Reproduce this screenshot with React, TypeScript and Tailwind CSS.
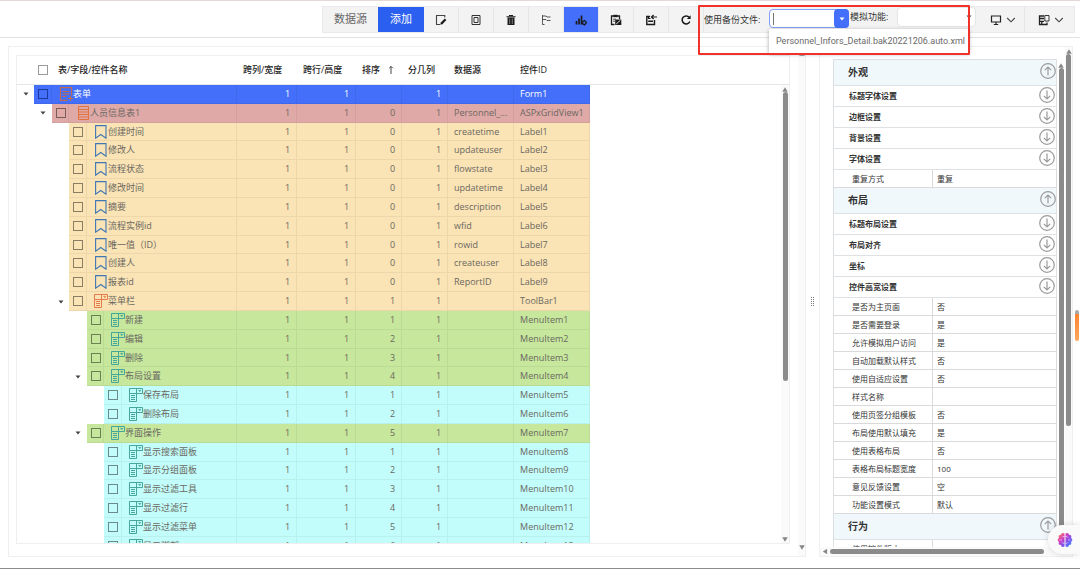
import type { ReactNode } from "react";
import clsx from "clsx";

type Kind = "form" | "grid" | "label" | "toolbar" | "menu";
type Row = {
  level: number;
  kind: Kind;
  name: string;
  order: string;
  source?: string;
  id: string;
  open?: boolean;
};

const label = (name: string, source: string, n: number): Row => ({
  level: 2,
  kind: "label",
  name,
  order: "0",
  source,
  id: `Label${n}`,
});
const menu = (level: number, name: string, order: number, n: number, open = false): Row => ({
  level,
  kind: "menu",
  name,
  order: String(order),
  id: `MenuItem${n}`,
  open,
});

const rows: Row[] = [
  { level: 0, kind: "form", name: "表单", order: "", id: "Form1", open: true },
  { level: 1, kind: "grid", name: "人员信息表1", order: "0", source: "Personnel_...", id: "ASPxGridView1", open: true },
  label("创建时间", "createtime", 1),
  label("修改人", "updateuser", 2),
  label("流程状态", "flowstate", 3),
  label("修改时间", "updatetime", 4),
  label("摘要", "description", 5),
  label("流程实例id", "wfid", 6),
  label("唯一值（ID）", "rowid", 7),
  label("创建人", "createuser", 8),
  label("报表id", "ReportID", 9),
  { level: 2, kind: "toolbar", name: "菜单栏", order: "1", id: "ToolBar1", open: true },
  menu(3, "新建", 1, 1),
  menu(3, "编辑", 2, 2),
  menu(3, "删除", 3, 3),
  menu(3, "布局设置", 4, 4, true),
  menu(4, "保存布局", 1, 5),
  menu(4, "删除布局", 2, 6),
  menu(3, "界面操作", 5, 7, true),
  menu(4, "显示搜索面板", 1, 8),
  menu(4, "显示分组面板", 2, 9),
  menu(4, "显示过滤工具", 3, 10),
  menu(4, "显示过滤行", 4, 11),
  menu(4, "显示过滤菜单", 5, 12),
  menu(4, "显示脚部", 6, 13),
];

const levelBg = ["bg-[#436ffa]", "bg-[#dfa9a7]", "bg-[#fae3b4]", "bg-[#c6e79c]", "bg-[#c2fdfb]"];

function BarMenuIcon({ className }: { className: string }) {
  return (
    <svg viewBox="0 0 14 14" className={clsx("h-3.5 w-3.5 shrink-0", className)} fill="none" stroke="currentColor" strokeWidth="1">
      <path d="M.5 .5H13.5V5.5H.5ZM7.5 .5V5.5M.5 5.5V13.5H7.5V5.5M2 7.5H6M2 9.5H6M2 11.5H6" />
      <path d="M9.5 2.3H12L10.8 3.8Z" fill="currentColor" strokeWidth=".5" />
    </svg>
  );
}

function RowIcon({ kind }: { kind: Kind }) {
  if (kind === "form")
    return (
      <svg viewBox="0 0 14 14" className="h-3.5 w-3.5 shrink-0" fill="none" stroke="#c4694f" strokeWidth="1.1">
        <path d="M8.5 13.4H1.5V.6H12.5V8.5M3.5 4.5H10.5M3.5 7H10.500M3.5 9.5H7.500M11.5 9V14M9 11.5H14" />
      </svg>
    );
  if (kind === "grid")
    return (
      <svg viewBox="0 0 14 14" className="h-3.5 w-3.5 shrink-0 text-[#e2733f]" fill="none" stroke="currentColor" strokeWidth="1">
        <path d="M2.500 .5H12.500V13.500H2.500ZM2.500 3.500H12.500M2.500 6H12.500M2.500 8.500H12.500M2.500 11H12.500" />
      </svg>
    );
  if (kind === "label")
    return (
      <svg viewBox="0 0 14 14" className="h-3.5 w-3.5 shrink-0 text-[#3f77b5]" fill="none" stroke="currentColor" strokeWidth="1.1">
        <path d="M1.600 .6H12V13.200L6.800 9.500L1.600 13.200Z" />
      </svg>
    );
  return <BarMenuIcon className={kind === "toolbar" ? "text-[#e57b4a]" : "text-[#45a79a]"} />;
}

function Caret({ className }: { className?: string }) {
  return (
    <svg viewBox="0 0 6 4" className={clsx("h-1 w-1.5", className)} fill="currentColor">
      <path d="M.5 .5H5.500L3 3.500Z" />
    </svg>
  );
}

function Tick({ name, className }: { name: string; className: string }) {
  return (
    <input
      type="checkbox"
      aria-label={name}
      className={clsx("block h-2.5 w-2.5 appearance-none border checked:bg-blue-600", className)}
    />
  );
}

function TreeRow({ row }: { row: Row }) {
  const bg = levelBg[row.level];
  const line = "border-b border-r border-black/5";
  const cell = clsx(bg, line, "overflow-hidden p-0 leading-4");
  const num = clsx(cell, "pr-1.5 text-right");
  return (
    <tr className={row.level === 0 ? "text-white" : "text-[#6b6862]"}>
      {row.level > 0 && <td colSpan={row.level} className="p-0" />}
      <td className="p-0">
        {row.open && (
          <button type="button" aria-label={`折叠 ${row.name}`} className="flex h-4 w-full items-center justify-center text-[#444]">
            <Caret />
          </button>
        )}
      </td>
      <td className={cell}>
        <div className="flex h-4 items-center justify-center pl-px">
          <Tick name={row.name} className={row.level === 0 ? "border-[#1c3a9c]" : "border-black/45"} />
        </div>
      </td>
      <td colSpan={5 - row.level} className={cell}>
        <div className="flex h-4 items-center pl-[7px] whitespace-nowrap">
          <RowIcon kind={row.kind} />
          <span>{row.name}</span>
        </div>
      </td>
      <td className={num}>1</td>
      <td className={num}>1</td>
      <td className={num}>{row.order}</td>
      <td className={num}>1</td>
      <td className={clsx(cell, "pl-1.5 whitespace-nowrap")}>{row.source}</td>
      <td className={clsx(cell, "pl-1.5 whitespace-nowrap")}>{row.id}</td>
      <td className="p-0" />
    </tr>
  );
}

function TreeTable() {
  return (
    <table className="h-[500px] w-full table-fixed border-separate border-spacing-0 text-[9px]">
      <colgroup>
        <col className="w-[17px]" />
        <col className="w-[18px]" />
        <col className="w-[17px]" />
        <col className="w-[18px]" />
        <col className="w-[17px]" />
        <col className="w-[18px]" />
        <col className="w-[115px]" />
        <col className="w-[60px]" />
        <col className="w-[59px]" />
        <col className="w-[46px]" />
        <col className="w-[46px]" />
        <col className="w-[66px]" />
        <col className="w-[76px]" />
        <col />
      </colgroup>
      <thead>
        <tr className="h-[29px] text-left text-[#1d1d1d] [&>th]:border-b [&>th]:border-[#e6e6e6] [&>th]:p-0 [&>th]:font-medium [&>th]:whitespace-nowrap">
          <th />
          <th>
            <Tick name="全选" className="mx-auto border-[#9a9a9a]" />
          </th>
          <th colSpan={5}>
            <span className="pl-1.5">表/字段/控件名称</span>
          </th>
          <th>
            <span className="pl-1.5">跨列/宽度</span>
          </th>
          <th>
            <span className="pl-1.5">跨行/高度</span>
          </th>
          <th>
            <span className="flex items-center gap-2 pl-1.5">
              排序
              <svg viewBox="0 0 6 10" className="h-2.5 w-1.5" fill="none" stroke="#333" strokeWidth=".9">
                <path d="M3 9V1.500M1.200 3.200L3 1.400L4.800 3.200" />
              </svg>
            </span>
          </th>
          <th>
            <span className="pl-1.5">分几列</span>
          </th>
          <th>
            <span className="pl-1.5">数据源</span>
          </th>
          <th>
            <span className="pl-1.5">控件ID</span>
          </th>
          <th />
        </tr>
      </thead>
      <tbody>
        {rows.map((r) => (
          <TreeRow key={r.id} row={r} />
        ))}
      </tbody>
    </table>
  );
}

function ScrollArrow({ down = false }: { down?: boolean }) {
  return (
    <svg viewBox="0 0 6 5" className={clsx("h-[5px] w-1.5 shrink-0 text-[#868686]", down && "rotate-180")} fill="currentColor">
      <path d="M3 .3L5.800 4.700H.2Z" />
    </svg>
  );
}

function VScroll({ thumb, down = true, className }: { thumb: string; down?: boolean; className?: string }) {
  return (
    <div className={clsx("flex shrink-0 flex-col items-center", className)}>
      <ScrollArrow />
      <div className={clsx("w-[5px] rounded-full bg-[#8b8b8b]", thumb)} />
      <div className="flex-1" />
      {down && <ScrollArrow down />}
    </div>
  );
}

type PropLine = { t: "head" | "sub"; text: string } | { t: "prop"; text: string; value: string };
const prop = (text: string, value: string): PropLine => ({ t: "prop", text, value });
const sub = (text: string): PropLine => ({ t: "sub", text });

const props: PropLine[] = [
  { t: "head", text: "外观" },
  sub("标题字体设置"),
  sub("边框设置"),
  sub("背景设置"),
  sub("字体设置"),
  prop("重复方式", "重复"),
  { t: "head", text: "布局" },
  sub("标题布局设置"),
  sub("布局对齐"),
  sub("坐标"),
  sub("控件高宽设置"),
  prop("是否为主页面", "否"),
  prop("是否需要登录", "是"),
  prop("允许模拟用户访问", "是"),
  prop("自动加载默认样式", "否"),
  prop("使用自适应设置", "否"),
  prop("样式名称", ""),
  prop("使用页签分组模板", "否"),
  prop("布局使用默认填充", "是"),
  prop("使用表格布局", "否"),
  prop("表格布局标题宽度", "100"),
  prop("意见反馈设置", "空"),
  prop("功能设置模式", "默认"),
  { t: "head", text: "行为" },
  prop("使用控件版本", ""),
];

function CircleArrow({ up = false }: { up?: boolean }) {
  return (
    <svg viewBox="0 0 16 16" className={clsx("mb-[3px] h-4 w-4", up && "rotate-180")} fill="none" stroke="#9b9b9b" strokeWidth="1.200">
      <circle cx="8" cy="8" r="7.300" />
      <path d="M8 3.500V12M4.800 8.800L8 12L11.200 8.800" />
    </svg>
  );
}

function PropertyTable() {
  return (
    <table className="w-full table-fixed border-separate border-spacing-0 border-t border-l border-[#dcdfe2] text-[8px] text-[#333]">
      <colgroup>
        <col className="w-[99px]" />
        <col />
      </colgroup>
      <tbody>
        {props.map((p) =>
          p.t === "prop" ? (
            <tr key={p.text} className="h-[18px]">
              <td className="border-r border-b border-[#dadada] py-0 pr-0 pl-[18px] leading-4 whitespace-nowrap">{p.text}</td>
              <td className="border-r border-b border-[#dadada] py-0 pr-0 pl-1 leading-4">{p.value}</td>
            </tr>
          ) : (
            <tr key={p.text} className={p.t === "head" ? "h-[26px] bg-[#f1f8fc]" : "h-[21px]"}>
              <td colSpan={2} className="border-r border-b border-[#dfe2e4] p-0">
                <button
                  type="button"
                  className={clsx(
                    "flex w-full items-center justify-between font-bold",
                    p.t === "head" ? "h-[25px] pl-3.5 text-[10px]" : "h-5 pr-px pl-[15px]",
                  )}
                >
                  {p.text}
                  <CircleArrow up={p.t === "head"} />
                </button>
              </td>
            </tr>
          ),
        )}
      </tbody>
    </table>
  );
}

function ToolButton({ name, active = false, children }: { name: string; active?: boolean; children: ReactNode }) {
  return (
    <button
      type="button"
      aria-label={name}
      className={clsx("flex w-[35px] items-center justify-center border-r border-[#e6e6e6]", active && "bg-[#436ffa]")}
    >
      <svg viewBox="0 0 12 12" className="h-3 w-3" fill="none" stroke="#1a1a1a" strokeWidth="1.100">
        {children}
      </svg>
    </button>
  );
}

function Chevron() {
  return (
    <svg viewBox="0 0 10 6" className="h-1.5 w-2.5" fill="none" stroke="#444" strokeWidth="1.100">
      <path d="M1.200 1L5 4.800L8.800 1" />
    </svg>
  );
}

function Toolbar() {
  return (
    <div className="flex h-[37px] shrink-0 justify-end border-b border-[#e2e2e2] pt-[5px] pr-[5px] pb-1">
      <div className="flex border border-[#ebebeb] bg-[#f3f3f3]">
        <button type="button" className="w-[55px] text-[11px] text-[#666]">
          数据源
        </button>
        <button type="button" className="w-[46px] bg-[#2b5ff0] text-[11px] text-white">
          添加
        </button>
        <ToolButton name="编辑">
          <path d="M9.800 3.500V1.500H1.500V10.500H5" stroke="#444" />
          <path d="M5.300 10.700L5.800 8.500L9.800 4.500L11.400 6L7.400 10.200Z" fill="#1a1a1a" stroke="none" />
        </ToolButton>
        <ToolButton name="布局">
          <path d="M2 1.500H10V10.500H2Z" stroke="#333" strokeWidth="1" />
          <path d="M4 3.500H8V8.500H4Z" stroke="#333" strokeWidth="1" />
        </ToolButton>
        <ToolButton name="删除">
          <path d="M2.500 3.500H9.500V11H2.500Z" fill="#1a1a1a" stroke="none" />
          <path d="M1.500 2.700H10.500M4.500 2V1.500H7.500V2" />
          <path d="M4.700 4.500V10M7.300 4.500V10" stroke="#a8a8a8" strokeWidth=".7" />
        </ToolButton>
        <ToolButton name="标记">
          <path d="M2.500 1V8.500M2.500 2H6L7 3H10.500M2.500 5.500H6L7 6.500H10.500M2.500 8.500V10.500H4.500" strokeWidth=".9" stroke="#444" />
        </ToolButton>
        <ToolButton name="图表" active>
          <path d="M1.500 10.500V7M4 10.500V4.500M6.500 10.500V1.500" strokeWidth="1.700" />
          <circle cx="9.300" cy="8.700" r="1.800" strokeWidth="1.300" />
          <path d="M9.300 5.800V7M9.300 10.400V11.600M6.500 8.700H7.600M11 8.700H12" strokeWidth=".9" />
        </ToolButton>
        <ToolButton name="校验">
          <path d="M9.500 5V2H1.500V10.500H4.500" strokeWidth="1.300" />
          <path d="M3.500 .8H7.500V3.200H3.500Z" fill="#1a1a1a" stroke="none" />
          <path d="M3 5.200H6M3 7.200H5" strokeWidth=".8" />
          <path d="M5.200 5.500H11.300V11H5.200Z" fill="#1a1a1a" stroke="none" />
          <path d="M6.200 10L10.400 6.300" stroke="#f3f3f3" strokeWidth=".9" />
        </ToolButton>
        <ToolButton name="备份">
          <path d="M5 2.500H1.800V10.500H9.500V6" strokeWidth="1.400" />
          <path d="M3.200 6.500H8V8H3.200Z" fill="#1a1a1a" stroke="none" />
          <path d="M6.500 3H12M8.600 1L6.500 3L8.600 5M3.500 2V4.500H5.500" strokeWidth="1.200" />
        </ToolButton>
        <ToolButton name="刷新">
          <path d="M9.800 7.500A4 4 0 1 1 9.200 3.300" strokeWidth="1.500" />
          <path d="M10.600 1.300V5H6.900Z" fill="#1a1a1a" stroke="none" />
        </ToolButton>

        <div className="relative flex w-[273px] text-[9px] text-[#333]">
          <label htmlFor="backup" className="flex w-[65px] items-center whitespace-nowrap">
            使用备份文件:
          </label>
          <div className="mt-0.5 flex h-[19px] w-20 rounded-sm border border-[#86a2f8] bg-white">
            <input id="backup" type="text" defaultValue="" className="min-w-0 flex-1 bg-transparent px-1 outline-none" />
            <button type="button" aria-label="打开备份文件列表" className="-my-px -mr-px flex w-[15px] items-center justify-center rounded-sm bg-[#436ffa] text-white">
              <Caret />
            </button>
          </div>
          <label htmlFor="feature" className="mt-0.5 flex h-[15px] w-12 items-center pl-px whitespace-nowrap">
            模拟功能:
          </label>
          <div className="relative h-5 w-[79px]">
            <select id="feature" className="h-full w-full appearance-none rounded-sm border border-[#e6e6e6] bg-white">
              <option value="" />
            </select>
            <Caret className="pointer-events-none absolute top-2 right-1 text-[#444]" />
          </div>

          <div className="absolute top-[6px] left-[69px] h-3 w-px bg-[#777]" />
          <ul role="listbox" aria-label="备份文件" className="absolute top-[22px] left-[65px] z-10 w-[200px] bg-white font-['Roboto',sans-serif] shadow-[0_1px_4px_rgba(0,0,0,0.35)]">
            <li role="option" aria-selected="false" className="pl-[7px] leading-6 whitespace-nowrap text-[#6a6a6a]">
              Personnel_Infors_Detail.bak20221206.auto.xml
            </li>
          </ul>
          <div className="pointer-events-none absolute -top-0.5 -left-1.5 z-20 h-[50px] w-[272px] rounded-[1px] border-2 border-[#f0322a]" />
        </div>

        <button type="button" aria-label="设备预览" className="flex w-12 items-center justify-end gap-1 border-r border-[#e6e6e6] pr-2">
          <svg viewBox="0 0 12 12" className="h-3 w-3" fill="none" stroke="#222" strokeWidth="1.200">
            <path d="M1.500 2H10.500V8H1.500ZM6 8V10.500M3.800 10.500H8.200" />
          </svg>
          <Chevron />
        </button>
        <button type="button" aria-label="窗口布局" className="flex w-[49px] items-center justify-center gap-1 pl-0.5">
          <svg viewBox="0 0 12 12" className="h-3 w-3" fill="none" stroke="#222" strokeWidth="1.300">
            <path d="M6 2H1.500V10.500H9V8.500M2 4.500H6M2 7.300H6M3.800 7V10" />
            <path d="M6.800 1.500H11V7H6.800Z" strokeWidth=".9" />
          </svg>
          <Chevron />
        </button>
      </div>
    </div>
  );
}

function Brain() {
  return (
    <svg viewBox="0 0 16 16" className="h-4 w-4">
      <defs>
        <linearGradient id="brain" x1="0" y1="0" x2="1" y2="1">
          <stop offset="0" stopColor="#ff8a3c" />
          <stop offset=".35" stopColor="#d63fc0" />
          <stop offset=".65" stopColor="#7a55f0" />
          <stop offset="1" stopColor="#2f9bff" />
        </linearGradient>
      </defs>
      <path
        fill="url(#brain)"
        d="M7.500 1.600C6.500 .4 4.200 .8 4 2.800C2 2.600 1 4.500 2 6C.2 6.600 .2 9.200 2 9.900C1 11.600 2.200 13.300 4 13C4.200 15.200 6.500 15.600 7.500 14.300ZM8.500 1.600C9.500 .4 11.800 .8 12 2.800C14 2.600 15 4.500 14 6C15.800 6.600 15.800 9.200 14 9.900C15 11.600 13.800 13.300 12 13C11.800 15.200 9.500 15.600 8.500 14.300Z"
      />
      <path
        d="M7.500 4.500H6L4.800 5.700M2.500 8H5M7.500 11.300H6L4.800 10.100M8.500 4.500H10L11.200 5.700M13.500 8H11M8.500 11.300H10L11.200 10.100"
        fill="none"
        stroke="#f6e8ff"
        strokeWidth=".6"
      />
    </svg>
  );
}

export default function App() {
  return (
    <div className="relative flex h-screen flex-col overflow-hidden border-t border-b border-t-[#e4d9d6] border-b-[#8c8c8c] bg-white font-['Open_Sans','Noto_Sans_CJK_SC',sans-serif]">
      <Toolbar />

      <main className="flex min-h-0 flex-1 pt-2 pr-[7px] pb-[11px] pl-2">
        <section className="flex min-w-0 flex-1 border border-[#efefef] pt-2 pl-[7px]">
          <div className="mb-3 flex min-w-0 flex-1 overflow-hidden border border-[#efefef]">
            <div className="min-w-0 flex-1">
              <TreeTable />
            </div>
            <VScroll thumb="h-[289px]" className="mt-7 w-2 border-t border-[#e6e6e6] bg-[#fafafa] pt-0.5 pb-px" />
          </div>
          <VScroll thumb="h-0" className="-mt-2 ml-2 w-[7px] bg-[#fafafa] pt-1 pb-1.5" />
        </section>

        <div className="flex w-[13px] items-center justify-center">
          <div className="h-[9px] w-[3px] border-x border-dotted border-[#777]" />
        </div>

        <section className="flex w-[254px] flex-col border border-[#efefef]">
          <div className="flex min-h-0 flex-1">
            <div className="mt-3 ml-[13px] min-w-0 flex-1 overflow-hidden">
              <PropertyTable />
            </div>
            <VScroll thumb="h-[490px]" down={false} className="mt-4 w-2 overflow-hidden" />
            <VScroll thumb="h-[372px]" down={false} className="w-[7px] bg-[#fafafa] pt-0.5" />
          </div>
          <div className="flex h-[9px] items-center gap-0.5 bg-[#fafafa] pl-0.5">
            <span className="-rotate-90">
              <ScrollArrow />
            </span>
            <div className="h-[5px] w-[214px] rounded-full bg-[#8b8b8b]" />
          </div>
        </section>
      </main>

      <div className="absolute right-px bottom-[227px] h-[31px] w-1 rounded-full border-t-4 border-[#aaa] bg-gradient-to-b from-[#ff8330] to-[#ffa85c]" />
      <button
        type="button"
        aria-label="智能助手"
        className="absolute right-0 bottom-[14px] flex h-[29px] w-8 items-center rounded-l-full bg-[#fafafa] pl-[9px] shadow-[0_0_6px_rgba(0,0,0,0.15)]"
      >
        <Brain />
      </button>
    </div>
  );
}
